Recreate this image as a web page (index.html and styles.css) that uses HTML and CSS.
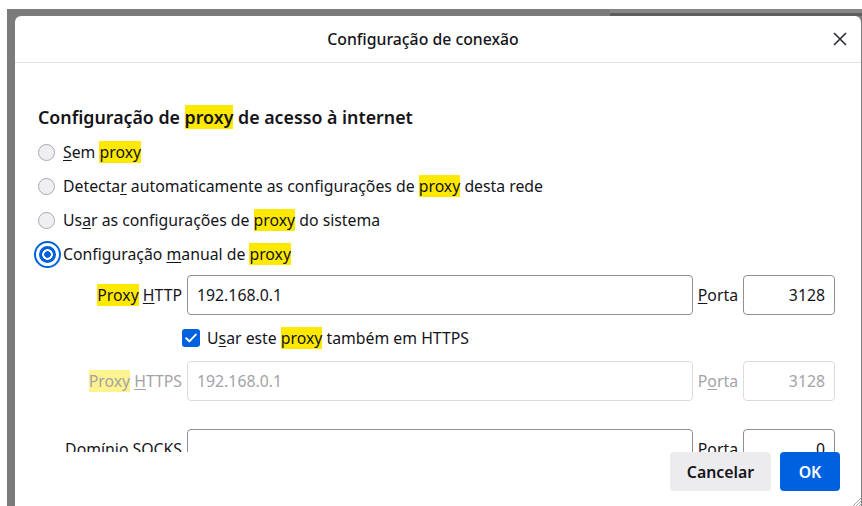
FILE: index.html
```html
<!DOCTYPE html>
<html lang="pt-BR">
<head>
<meta charset="utf-8">
<title>Configuração de conexão</title>
<link rel="stylesheet" href="styles.css">
</head>
<body>
<div class="backdrop">
  <div class="dialog">
    <header class="dialog-header">
      <h1 class="dialog-title">Configuração de conexão</h1>
      <button class="close-btn" aria-label="Fechar">
        <svg width="14" height="14" viewBox="0 0 14 14"><path d="M1 1L13 13M13 1L1 13" stroke="#2b2a33" stroke-width="1.6" fill="none"/></svg>
      </button>
    </header>

    <div class="dialog-body">
      <h2 class="section-title">Configuração de <mark>proxy</mark> de acesso à internet</h2>

      <label class="radio-row"><span class="radio"></span><span><u>S</u>em <mark>proxy</mark></span></label>
      <label class="radio-row"><span class="radio"></span><span>Detecta<u>r</u> automaticamente as configurações de <mark>proxy</mark> desta rede</span></label>
      <label class="radio-row"><span class="radio"></span><span>Us<u>a</u>r as configurações de <mark>proxy</mark> do sistema</span></label>
      <label class="radio-row"><span class="radio checked"></span><span>Configuração <u>m</u>anual de <mark>proxy</mark></span></label>

      <div class="field-row first">
        <span class="field-label"><mark>Proxy</mark> <u>H</u>TTP</span>
        <span class="text-input">192.168.0.1</span>
        <span class="port-label"><u>P</u>orta</span>
        <span class="text-input port">3128</span>
      </div>

      <label class="check-row">
        <span class="checkbox"><svg width="18" height="18" viewBox="0 0 18 18"><path d="M4.2 9.3L7.4 12.4L13.8 5.6" stroke="#fff" stroke-width="2" fill="none" stroke-linecap="round" stroke-linejoin="round"/></svg></span>
        <span>U<u>s</u>ar este <mark>proxy</mark> também em HTTPS</span>
      </label>

      <div class="field-row disabled">
        <span class="field-label"><mark>Proxy</mark> <u>H</u>TTPS</span>
        <span class="text-input">192.168.0.1</span>
        <span class="port-label">P<u>o</u>rta</span>
        <span class="text-input port">3128</span>
      </div>

      <div class="field-row socks">
        <span class="field-label">Domínio SOCKS</span>
        <span class="text-input"></span>
        <span class="port-label">Porta</span>
        <span class="text-input port">0</span>
      </div>
    </div>

    <footer class="dialog-footer">
      <button class="btn">Cancelar</button>
      <button class="btn primary">OK</button>
    </footer>

    <svg class="resize-grip" width="10" height="10" viewBox="0 0 10 10"><path d="M10 1L1 10M10 4L4 10M10 7L7 10" stroke="#a0a0a0" stroke-width="1" fill="none"/></svg>
  </div>
</div>
</body>
</html>
```

FILE: styles.css
```css
* { box-sizing: border-box; }

html, body {
  margin: 0;
  background: #ffffff;
  overflow: hidden;
}

body {
  font-family: "Noto Sans", "Open Sans", sans-serif;
  font-size: 15.8px;
  color: #15141a;
}

.backdrop {
  position: relative;
  margin: 9px 0 0 7px;
  height: 497px;
  padding: 7px 1px 0 8px;
  background: #7b7b7b;
}

/* strip of the window behind the dialog */
.backdrop::before {
  content: "";
  position: absolute;
  left: 603px;
  right: 0;
  top: 0;
  height: 7px;
  background: linear-gradient(#868686 0 4px, #5e5e5e 4px);
}

.dialog {
  position: relative;
  height: 490px;
  background: #ffffff;
  border-radius: 6px 6px 0 0;
  display: flex;
  flex-direction: column;
}

.dialog-header {
  height: 47px;
  display: flex;
  align-items: center;
  border-bottom: 1px solid #e0e0e6;
  flex: none;
}

.dialog-title {
  flex: 1;
  margin: 0;
  text-align: center;
  font-size: 15.8px;
  font-weight: 500;
}

.close-btn {
  width: 14px;
  height: 14px;
  margin: 0 14px 0 2px;
  padding: 0;
  border: 0;
  background: none;
  display: flex;
}

.dialog-body {
  flex: 1;
  overflow: hidden;
  padding: 42px 26px 0 23px;
}

mark {
  background: #ffe900;
  color: inherit;
}

u { text-decoration-thickness: 1px; text-underline-offset: 2px; }

.section-title {
  margin: 0 0 6px;
  font-size: 17.8px;
  font-weight: 600;
  line-height: 24px;
}

.radio-row {
  height: 34px;
  display: flex;
  align-items: center;
  gap: 8px;
}

.radio {
  width: 17px;
  height: 17px;
  border-radius: 50%;
  border: 1px solid #a8a8b0;
  background: #efeff1;
  flex: none;
}

.radio.checked {
  border: 0;
  background: radial-gradient(circle, #0061e0 0 3px, #ffffff 3.6px 5px, #0061e0 5.6px);
  outline: 2px solid #0061e0;
  outline-offset: 3px;
  margin-left: 1px;
  margin-right: -1px;
}

.field-row {
  display: grid;
  grid-template-columns: 144px 1fr auto 92px;
  column-gap: 5px;
  align-items: center;
  height: 40px;
}

.field-row.first { margin-top: 4px; }
.field-row.socks { margin-top: 28px; }

.field-label { text-align: right; white-space: nowrap; }

.text-input {
  height: 40px;
  border: 1px solid #8f8f9d;
  border-radius: 4px;
  padding: 0 9px;
  display: flex;
  align-items: center;
  background: #fff;
}

.text-input.port { justify-content: flex-end; }

.field-row.disabled { color: #a3a3a6; }
.field-row.disabled mark { background: #fff38f; }
.field-row.disabled .text-input { border-color: #dcdce0; }

.check-row {
  margin: 14px 0 14px 144px;
  height: 18px;
  display: flex;
  align-items: center;
  gap: 7px;
}

.checkbox {
  width: 18px;
  height: 18px;
  border-radius: 3px;
  background: #0061e0;
  display: flex;
}

.dialog-footer {
  flex: none;
  height: 54px;
  display: flex;
  justify-content: flex-end;
  align-items: flex-start;
  gap: 9px;
  padding-right: 21px;
}

.btn {
  height: 39px;
  padding: 0 17px;
  border: 0;
  border-radius: 4px;
  background: #ececee;
  font-family: inherit;
  font-size: 15.8px;
  font-weight: 600;
  color: #15141a;
}

.btn.primary {
  background: #0061e0;
  color: #ffffff;
  width: 60px;
  padding: 0;
}

.resize-grip {
  position: absolute;
  right: -1px;
  bottom: 0;
}
```
